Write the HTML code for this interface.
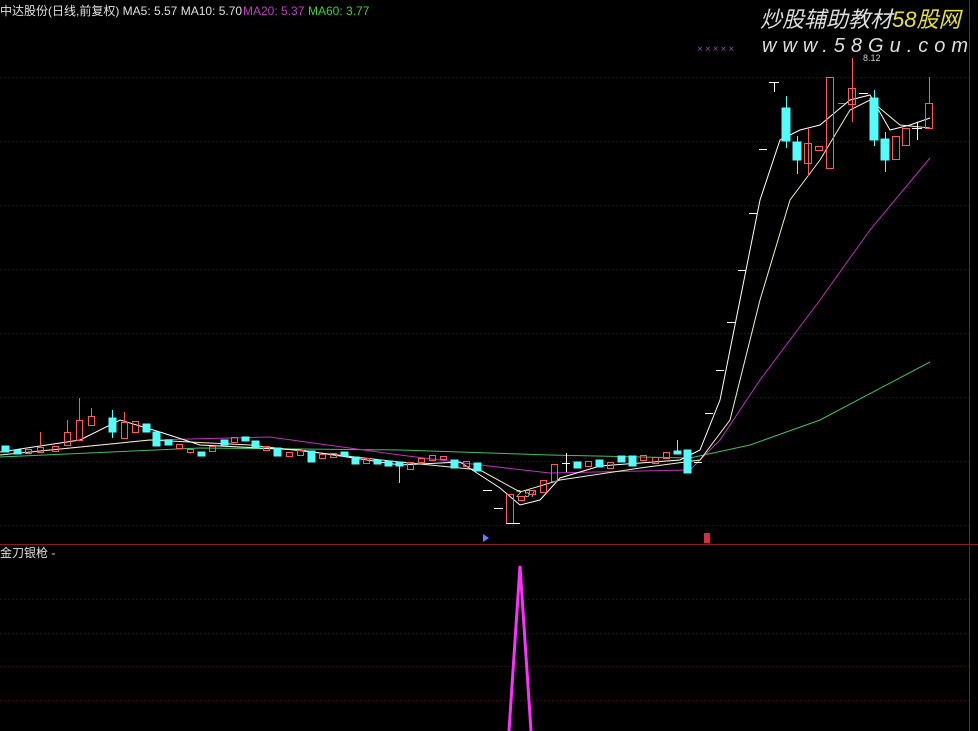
<!DOCTYPE html><html><head><meta charset="utf-8"><style>
html,body{margin:0;padding:0;background:#000;width:978px;height:731px;overflow:hidden}
svg{display:block}
text{font-family:"Liberation Sans","Noto Sans CJK SC",sans-serif}
</style></head><body>
<svg width="978" height="731" xmlns="http://www.w3.org/2000/svg">
<g stroke="#3a0a14" stroke-width="1" stroke-dasharray="2,2">
<line x1="0" y1="77.5" x2="969" y2="77.5"/><line x1="0" y1="141.5" x2="969" y2="141.5"/><line x1="0" y1="205.5" x2="969" y2="205.5"/><line x1="0" y1="269.5" x2="969" y2="269.5"/><line x1="0" y1="333.5" x2="969" y2="333.5"/><line x1="0" y1="397.5" x2="969" y2="397.5"/><line x1="0" y1="461.5" x2="969" y2="461.5"/><line x1="0" y1="525.5" x2="969" y2="525.5"/>
<line x1="0" y1="599.5" x2="969" y2="599.5"/><line x1="0" y1="633.5" x2="969" y2="633.5"/><line x1="0" y1="666.5" x2="969" y2="666.5"/><line x1="0" y1="700.5" x2="969" y2="700.5"/>
</g>
<line x1="0" y1="544.5" x2="978" y2="544.5" stroke="#8a1a2a"/>
<line x1="969.5" y1="0" x2="969.5" y2="731" stroke="#8a1a2a"/>
<text x="0" y="15" font-size="12" fill="#e0e0e0">中达股份(日线,前复权) MA5: 5.57  MA10: 5.70</text>
<text x="243" y="15" font-size="12" fill="#c040c0">MA20: 5.37</text>
<text x="308" y="15" font-size="12" fill="#40d040">MA60: 3.77</text>
<text x="760" y="27" font-size="22" font-style="italic" fill="#ddd">炒股辅助教材<tspan fill="#e8e040">58股网</tspan></text>
<text x="762" y="52" font-size="20" font-style="italic" fill="#ddd" letter-spacing="6">www.58Gu.com</text>
<text x="697" y="52" font-size="10" fill="#a040c0" letter-spacing="2">×××××</text>
<text x="863" y="61" font-size="9" fill="#ccc">8.12</text>
<text x="516" y="497" font-size="10" fill="#ccc">2.57</text>
<g fill="none" stroke-width="1">
<polyline stroke="#40c060" points="0,457 200,448 400,450 550,455 690,458 750,445 820,420 930,362"/>
<polyline stroke="#c030c0" points="0,455 150,440 270,437 400,455 480,465 550,473 690,470 720,440 760,380 820,300 870,230 930,158"/>
<polyline stroke="#f0f0c0" points="0,455 150,440 250,445 400,462 480,470 520,492 560,480 640,468 700,460 730,420 760,300 790,200 820,160 850,110 870,100 900,125 930,128"/>
<polyline stroke="#ffffff" points="0,452 80,440 120,420 160,432 200,445 300,450 400,465 460,462 500,488 520,505 540,500 560,478 600,466 680,460 700,450 720,400 740,300 760,200 780,140 800,130 820,125 850,100 870,95 890,130 910,125 930,118"/>
</g>
<g id="c" stroke-width="1">
<!-- cyan candles: rect filled -->
<g fill="#54fcfc" stroke="#54fcfc">
<rect x="2" y="446" width="7" height="6"/><rect x="14" y="450" width="7" height="4"/><rect x="109" y="418" width="7" height="14"/><line x1="112.5" y1="410" x2="112.5" y2="438"/><rect x="143" y="424" width="7" height="8"/><rect x="153" y="432" width="7" height="14"/><rect x="165" y="440" width="7" height="5"/><rect x="198" y="452" width="7" height="4"/><rect x="221" y="440" width="7" height="5"/><rect x="242" y="437" width="7" height="4"/><rect x="252" y="441" width="7" height="7"/><rect x="274" y="448" width="7" height="8"/><rect x="308" y="451" width="7" height="11"/><rect x="341" y="452" width="7" height="4"/><rect x="352" y="457" width="7" height="7"/><rect x="374" y="460" width="7" height="4"/><rect x="385" y="461" width="7" height="5"/><rect x="396" y="462" width="7" height="4"/><line x1="399.5" y1="466" x2="399.5" y2="483"/><rect x="451" y="460" width="7" height="8"/><rect x="474" y="463" width="7" height="8"/><rect x="574" y="462" width="7" height="6"/><rect x="596" y="460" width="7" height="7"/><rect x="618" y="456" width="7" height="6"/><rect x="629" y="456" width="7" height="10"/><rect x="674" y="451" width="7" height="3"/><line x1="677.5" y1="440" x2="677.5" y2="451"/><rect x="684" y="450" width="7" height="23"/>
<rect x="782" y="108" width="8" height="33"/><line x1="786.5" y1="96" x2="786.5" y2="148"/><rect x="793" y="142" width="8" height="18"/><line x1="797.5" y1="136" x2="797.5" y2="174"/><rect x="870" y="98" width="8" height="42"/><line x1="874.5" y1="90" x2="874.5" y2="146"/><rect x="881" y="139" width="8" height="21"/><line x1="885.5" y1="132" x2="885.5" y2="172"/>
</g>
<g fill="none" stroke="#ff5a5a">
<rect x="25.5" y="449.5" width="6" height="4"/><rect x="37.5" y="447.5" width="6" height="5"/><line x1="40.5" y1="432" x2="40.5" y2="447"/><rect x="52.5" y="446.5" width="6" height="5"/><rect x="64.5" y="432.5" width="6" height="13"/><line x1="67.5" y1="420" x2="67.5" y2="432"/><rect x="76.5" y="420.5" width="6" height="20"/><line x1="79.5" y1="398" x2="79.5" y2="420"/><rect x="88.5" y="416.5" width="6" height="9"/><line x1="91.5" y1="408" x2="91.5" y2="416"/><rect x="121.5" y="422.5" width="6" height="16"/><line x1="124.5" y1="412" x2="124.5" y2="422"/><rect x="132.5" y="421.5" width="6" height="11"/><rect x="176.5" y="444.5" width="6" height="4"/><rect x="187.5" y="449.5" width="6" height="3"/><rect x="209.5" y="446.5" width="6" height="5"/><rect x="231.5" y="437.5" width="6" height="5"/><rect x="263.5" y="446.5" width="6" height="4"/><rect x="286.5" y="452.5" width="6" height="4"/><rect x="297.5" y="450.5" width="6" height="5"/><rect x="319.5" y="454.5" width="6" height="4"/><rect x="330.5" y="453.5" width="6" height="4"/><rect x="363.5" y="458.5" width="6" height="5"/><rect x="407.5" y="462.5" width="6" height="7"/><rect x="418.5" y="458.5" width="6" height="4"/><rect x="429.5" y="455.5" width="6" height="5"/><rect x="440.5" y="456.5" width="6" height="3"/><rect x="463.5" y="461.5" width="6" height="5"/>
<rect x="506.5" y="494.5" width="7" height="29"/><rect x="518.5" y="496.5" width="6" height="4"/><rect x="529.5" y="490.5" width="6" height="4"/><rect x="540.5" y="480.5" width="6" height="12"/><rect x="551.5" y="464.5" width="6" height="17"/><rect x="585.5" y="461.5" width="6" height="5"/><rect x="607.5" y="462.5" width="6" height="6"/><rect x="640.5" y="455.5" width="6" height="5"/><rect x="652.5" y="457.5" width="6" height="6"/><rect x="663.5" y="452.5" width="6" height="6"/>
<rect x="804.5" y="143.5" width="7" height="20"/><line x1="808.5" y1="128" x2="808.5" y2="176"/><rect x="815.5" y="146.5" width="7" height="4"/><rect x="826.5" y="77.5" width="7" height="91"/><rect x="848.5" y="88.5" width="7" height="16"/><line x1="852.5" y1="58" x2="852.5" y2="122"/><rect x="892.5" y="136.5" width="7" height="23"/><rect x="902.5" y="128.5" width="7" height="17"/><rect x="925.5" y="103.5" width="7" height="25"/><line x1="929.5" y1="77" x2="929.5" y2="103"/><line x1="838" y1="103.5" x2="845" y2="103.5"/>
</g>
<g stroke="#fff">
<line x1="483" y1="490.5" x2="492" y2="490.5"/><line x1="494" y1="508.5" x2="503" y2="508.5"/><line x1="506" y1="523.5" x2="520" y2="523.5"/><line x1="562" y1="463.5" x2="570" y2="463.5"/><line x1="566.5" y1="453" x2="566.5" y2="472"/><line x1="694" y1="462.5" x2="702" y2="462.5"/><line x1="705" y1="413.5" x2="713" y2="413.5"/><line x1="716" y1="370.5" x2="724" y2="370.5"/><line x1="727" y1="322.5" x2="735" y2="322.5"/><line x1="738" y1="270.5" x2="746" y2="270.5"/><line x1="749" y1="213.5" x2="757" y2="213.5"/><line x1="759" y1="149.5" x2="767" y2="149.5"/><line x1="769" y1="82.5" x2="779" y2="82.5"/><line x1="774.5" y1="82" x2="774.5" y2="92"/><line x1="859" y1="93.5" x2="868" y2="93.5"/><line x1="912" y1="128.5" x2="922" y2="128.5"/><line x1="917.5" y1="122" x2="917.5" y2="140"/>
</g>
</g>
<text x="0" y="557" font-size="12" fill="#e0e0e0">金刀银枪  -</text>
<path d="M483,534 L489,538 L483,542 Z" fill="#6080ff"/>
<rect x="704" y="533" width="6" height="10" fill="#d03040"/>
<polyline points="509,731 520,566 531,731" fill="none" stroke="#ff30ff" stroke-width="3"/>
</svg>
</body></html>
